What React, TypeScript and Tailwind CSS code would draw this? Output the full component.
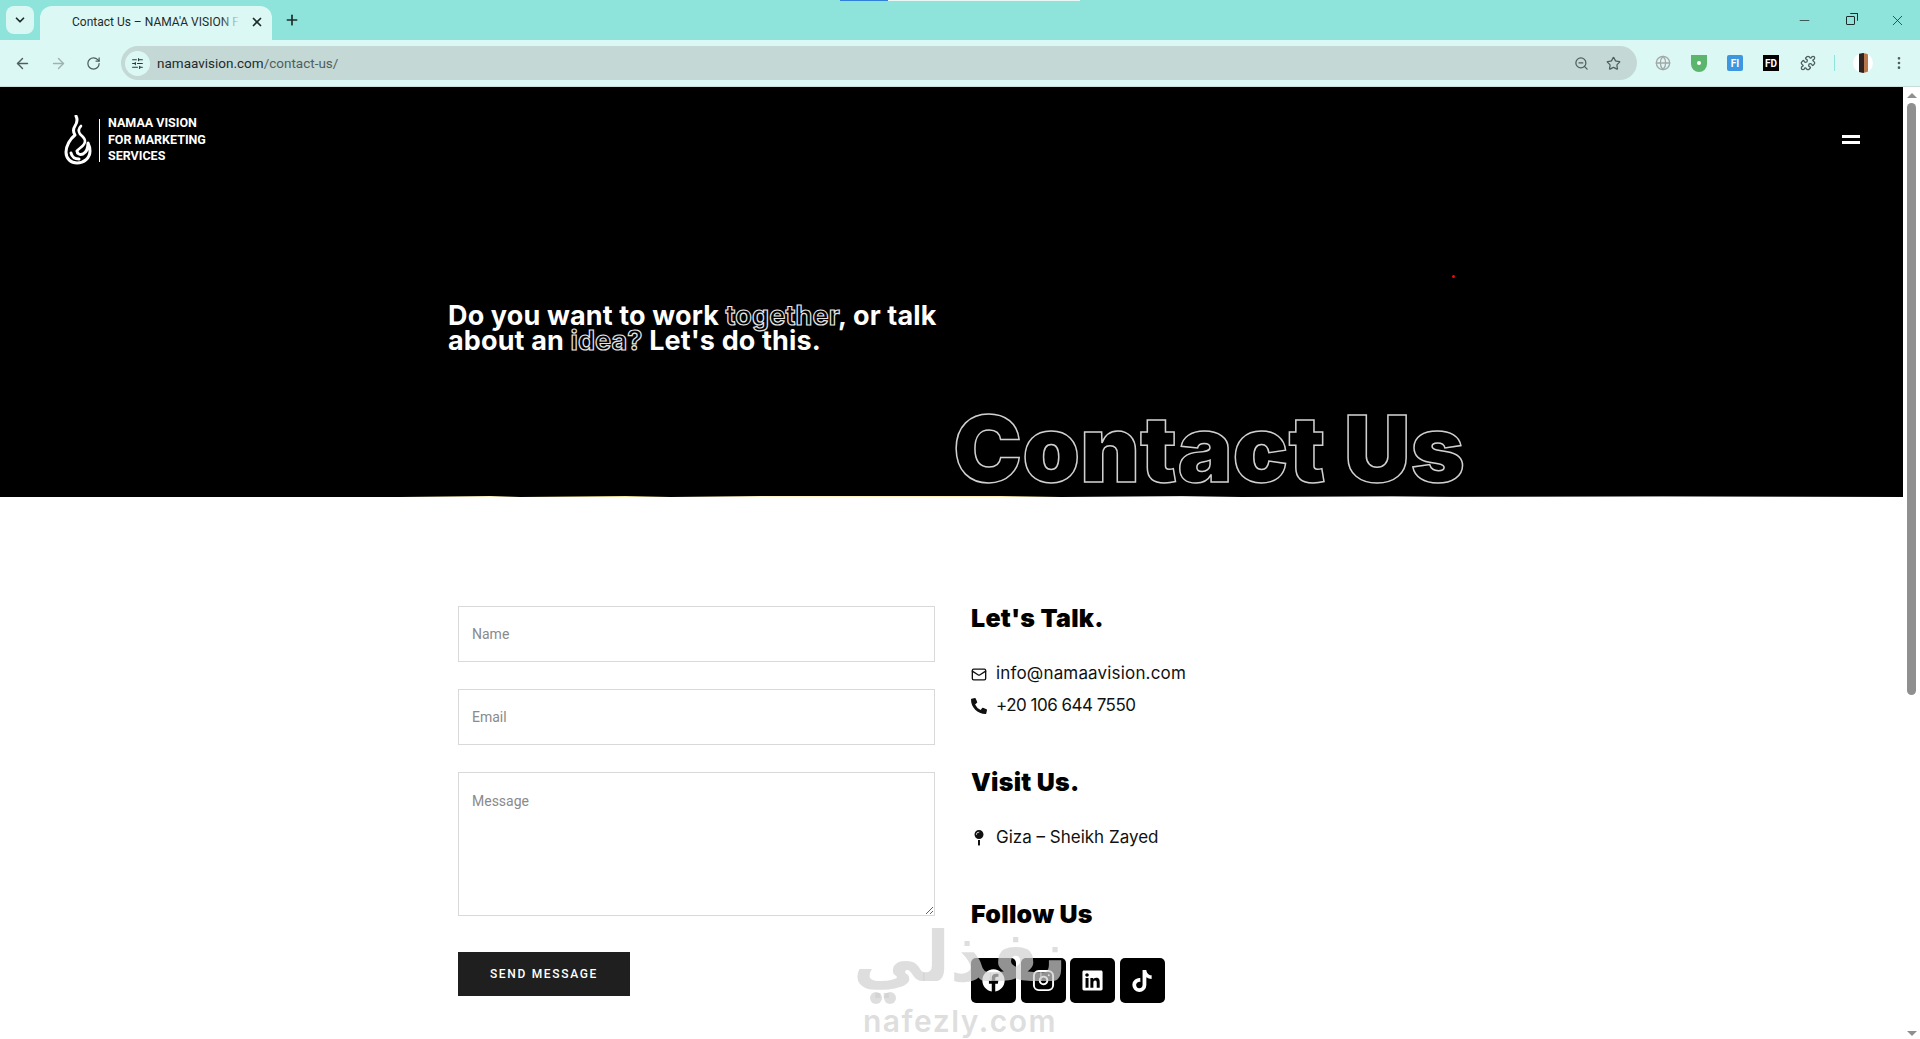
import React from 'react';
import {
  ArrowLeft,
  ArrowRight,
  ChevronDown,
  Globe,
  Instagram,
  Mail,
  Minus,
  MoreVertical,
  Plus,
  Puzzle,
  RotateCw,
  SlidersHorizontal,
  Star,
  X,
  ZoomOut,
} from 'lucide-react';
import { FaFacebook, FaLinkedin, FaMapPin, FaPhoneAlt, FaTiktok } from 'react-icons/fa';

const poppins = "font-['Inter','Open_Sans',sans-serif]";
const roboto = "font-['Roboto','Liberation_Sans',sans-serif]";

const FlameLogo: React.FC = () => (
  <svg width="28" height="50" viewBox="0 0 28 50" fill="none" className="shrink-0">
    {/* outer flame */}
    <path
      d="M12 1c2 4 1 7-1 10-2 3-2 6 0 9-5 4-9 11-9 17 0 7 5 11 11 11 7 0 13-5 13-12 0-3-1-6-2-8 0 5-1 9-5 11-3 1-6 0-6-3"
      stroke="white"
      strokeWidth="3"
      strokeLinecap="round"
      strokeLinejoin="round"
    />
    {/* inner swirl */}
    <path
      d="M13 36c3-4 8-5 8-10 0-3-3-5-5-7-2-3-1-6 1-8"
      stroke="white"
      strokeWidth="2.6"
      strokeLinecap="round"
    />
    <path d="M7 38c1 4 4 6 8 6" stroke="white" strokeWidth="3" strokeLinecap="round" />
  </svg>
);

const BrowserChrome: React.FC = () => (
  <div className={`relative shrink-0 ${roboto}`}>
    {/* loading strip */}
    <div className="absolute top-0 left-[840px] flex h-px">
      <div className="h-px w-[48px] bg-[#2f80d8]" />
      <div className="h-px w-[192px] bg-[#e6f7f5]" />
    </div>

    {/* Tab strip */}
    <div className="flex h-[40px] items-end bg-[#8ee3da] pl-[6px]">
      <div className="mb-[6px] flex h-[28px] w-[28px] items-center justify-center rounded-lg bg-[#d9f7f3]">
        <ChevronDown size={14} strokeWidth={3} className="text-[#1f2b2a]" />
      </div>
      <div className="ml-[6px] flex h-[34px] w-[232px] items-center rounded-t-xl bg-[#dcf8f5] pr-[8px] pb-[2px] pl-[32px]">
        <span className="relative w-[168px] overflow-hidden text-[12px] whitespace-nowrap text-[#1f2b2a]">
          Contact Us – NAMA'A VISION F
          <span className="absolute top-0 right-0 h-full w-[20px] bg-gradient-to-r from-transparent to-[#dcf8f5]" />
        </span>
        <X size={14} strokeWidth={3} className="ml-auto text-[#1f2b2a]" />
      </div>
      <div className="mb-[6px] ml-[6px] flex h-[28px] w-[28px] items-center justify-center">
        <Plus size={16} strokeWidth={2.5} className="text-[#1f2b2a]" />
      </div>
      <div className="mb-[11px] ml-auto flex items-center gap-[34px] pr-[14px] text-[#1f2b2a]">
        <Minus size={15} strokeWidth={1.2} />
        <div className="relative h-[9px] w-[9px] rounded-[1px] border border-[#1f2b2a]">
          <div className="absolute -top-[4px] -right-[4px] h-[8px] w-[8px] rounded-[1px] border-t border-r border-[#1f2b2a]" />
        </div>
        <X size={17} strokeWidth={1.1} />
      </div>
    </div>

    {/* Toolbar */}
    <div className="flex h-[47px] items-center border-b border-[#c8dcd9] bg-[#dcf8f5] pl-[14px]">
      <ArrowLeft size={17} className="text-[#4f5f5d]" />
      <ArrowRight size={17} className="ml-[19px] text-[#9db3b0]" />
      <RotateCw size={15} className="ml-[19px] text-[#4f5f5d]" />
      <div className="ml-[20px] flex h-[34px] w-[1516px] items-center rounded-full bg-[#c4d8d6] pr-[16px] pl-[4px]">
        <div className="flex h-[25px] w-[25px] items-center justify-center rounded-full bg-[#dcf8f5]">
          <SlidersHorizontal size={13} className="text-[#2a3837]" />
        </div>
        <span className="ml-[7px] text-[13.5px] text-[#1f2b2a]">
          namaavision.com<span className="text-[#4f5f5d]">/contact-us/</span>
        </span>
        <ZoomOut size={15} className="ml-auto text-[#4f5f5d]" />
        <Star size={15} className="ml-[17px] text-[#4f5f5d]" />
      </div>
      <Globe size={16} className="ml-[18px] text-[#a1a8a7]" />
      <div className="ml-[20px] flex h-[17px] w-[16px] items-center justify-center rounded-t-[3px] rounded-b-full bg-[#5cb56d]">
        <span className="h-[4px] w-[4px] rounded-full bg-white" />
      </div>
      <div className="ml-[20px] flex h-[16px] w-[16px] items-center justify-center rounded-[2px] bg-[#3d97e0] text-[10px] font-bold text-white">
        FI
      </div>
      <div className="ml-[20px] flex h-[16px] w-[16px] items-center justify-center bg-black text-[10px] font-bold text-white">
        FD
      </div>
      <Puzzle size={16} className="ml-[21px] text-[#4f5f5d]" />
      <div className="ml-[18px] h-[16px] w-px bg-[#8ee3da]" />
      <div className="ml-[18px] flex h-[20px] w-[20px] items-center justify-center overflow-hidden rounded-full bg-white">
        <div className="h-[20px] w-[5px] bg-[#2c2320]" />
        <div className="h-[20px] w-[4px] bg-[#b9764a]" />
      </div>
      <MoreVertical size={16} className="ml-[18px] text-[#4f5f5d]" />
    </div>
  </div>
);

const Scrollbar: React.FC = () => (
  <div className="flex w-[17px] shrink-0 flex-col items-center bg-white pt-[6px] pb-[3px]">
    <div className="h-0 w-0 border-x-[5px] border-b-[5px] border-x-transparent border-b-[#8f8f8f]" />
    <div className="mt-[5px] h-[592px] w-[9px] rounded-full bg-[#8f8f8f]" />
    <div className="mt-auto h-0 w-0 border-x-[5px] border-t-[5px] border-x-transparent border-t-[#8f8f8f]" />
  </div>
);

const Hero: React.FC = () => (
  <section className="relative h-[410px] shrink-0 bg-black">
    <div className="flex items-start justify-between pt-[28px] pr-[43px] pl-[64px]">
      <div className="flex items-center">
        <FlameLogo />
        <div className="ml-[7px] h-[43px] w-px bg-white" />
        <div className={`ml-[8px] text-[12.5px] leading-[16.5px] font-bold text-white ${roboto}`}>
          <div>NAMAA VISION</div>
          <div>FOR MARKETING</div>
          <div>SERVICES</div>
        </div>
      </div>
      <div className="mt-[20px] flex flex-col gap-[3px]">
        <div className="h-[3px] w-[18px] bg-white" />
        <div className="h-[3px] w-[18px] bg-white" />
      </div>
    </div>

    <h2 className={`mt-[138px] ml-[448px] text-[27px] leading-[25px] font-bold tracking-[0.005em] text-white ${poppins}`}>
      <div>
        Do you want to work{' '}
        <span className="text-black [-webkit-text-stroke:1.2px_#e6e6e6]">together</span>, or talk
      </div>
      <div>
        about an <span className="text-black [-webkit-text-stroke:1.2px_#e6e6e6]">idea?</span> Let's do this.
      </div>
    </h2>

    <h1
      className={`mt-[49px] ml-[953px] text-[92.5px] leading-[92px] font-black whitespace-nowrap text-transparent [-webkit-text-stroke:1.5px_#d0d0d0] ${poppins}`}
    >
      Contact Us
    </h1>

    {/* stray dot of the hero animation */}
    <div className="absolute top-[188px] left-[1452px] h-[3px] w-[3px] rounded-full bg-[#e01010]" />
    {/* thin bright seam under the hero */}
    <div className="absolute right-0 bottom-0 left-[400px] h-px bg-[linear-gradient(90deg,#000,#fff3c4_6%,#000_8%,#f7e6a0_15%,#000_18%,#fff2c8_24%,#ffe9b0_40%,#000_44%,#ddd_52%,#000_56%,#aaa_66%,#222_70%,#999_84%,#000)]" />
  </section>
);

const ContactForm: React.FC = () => {
  const field =
    'w-full border border-[#d9d9d9] bg-white px-[13px] text-[14px] text-[#333] outline-none placeholder:text-[#8a8a8a] ' + roboto;

  return (
    <form className="flex w-[477px] flex-col">
      <input placeholder="Name" className={`${field} h-[56px]`} />
      <input placeholder="Email" className={`${field} mt-[27px] h-[56px]`} />
      <textarea placeholder="Message" className={`${field} mt-[27px] block h-[144px] py-[18px]`} />
      <button
        type="button"
        className={`mt-[36px] h-[44px] w-[172px] bg-[#1f1f1f] text-[12px] font-medium tracking-[0.14em] text-white ${roboto}`}
      >
        SEND MESSAGE
      </button>
    </form>
  );
};

const SocialTile: React.FC<{ children: React.ReactNode }> = ({ children }) => (
  <div className="flex h-[45px] w-[45px] items-center justify-center rounded-[5px] bg-black text-white">
    {children}
  </div>
);

const ContactInfo: React.FC = () => {
  const heading = `text-[25px] leading-[30px] font-black tracking-[0.01em] text-black ${poppins}`;
  const row = `flex h-[32px] items-center gap-[9px] text-[17px] text-[#111] ${poppins}`;

  return (
    <div className="ml-[36px] flex flex-col">
      <h3 className={`-mt-[3px] ${heading}`}>Let's Talk.</h3>
      <div className={`mt-[25px] ${row}`}>
        <Mail size={17} className="w-[16px] shrink-0" />
        <span className="tracking-[0.01em]">info@namaavision.com</span>
      </div>
      <div className={row}>
        <FaPhoneAlt size={16} className="w-[16px] shrink-0" />
        <span className="tracking-[-0.03em]">+20 106 644 7550</span>
      </div>
      <h3 className={`mt-[45px] ${heading}`}>Visit Us.</h3>
      <div className={`mt-[25px] ${row}`}>
        <FaMapPin size={16} className="w-[16px] shrink-0" />
        Giza – Sheikh Zayed
      </div>
      <h3 className={`mt-[45px] ${heading}`}>Follow Us</h3>
      <div className="mt-[29px] flex gap-[4.5px]">
        <SocialTile>
          <FaFacebook size={23} />
        </SocialTile>
        <SocialTile>
          <Instagram size={23} />
        </SocialTile>
        <SocialTile>
          <FaLinkedin size={23} />
        </SocialTile>
        <SocialTile>
          <FaTiktok size={22} />
        </SocialTile>
      </div>
    </div>
  );
};

const Watermark: React.FC = () => (
  <div className="pointer-events-none absolute top-[922px] left-[852px] flex w-[216px] flex-col items-center text-[#d0d0d0]/70">
    <div className="font-['DejaVu_Sans',sans-serif] text-[70px] leading-[70px] font-bold whitespace-nowrap">نفذلي</div>
    <div className="flex h-[12px] w-full gap-[2px] pl-[18px]">
      <span className="h-[12px] w-[12px] rounded-full bg-[#d0d0d0]/70" />
      <span className="h-[12px] w-[12px] rounded-full bg-[#d0d0d0]/70" />
    </div>
    <div className={`text-[30px] leading-[34px] font-semibold tracking-[0.05em] whitespace-nowrap ${poppins}`}>nafezly.com</div>
  </div>
);

export default function App() {
  return (
    <div className="relative flex h-[1039px] w-[1920px] flex-col overflow-hidden bg-white">
      <BrowserChrome />
      <div className="flex min-h-0 flex-1">
        <main className="min-w-0 flex-1">
          <Hero />
          <div className="flex pt-[109px] pl-[458px]">
            <ContactForm />
            <ContactInfo />
          </div>
        </main>
        <Scrollbar />
      </div>
      <Watermark />
    </div>
  );
}
